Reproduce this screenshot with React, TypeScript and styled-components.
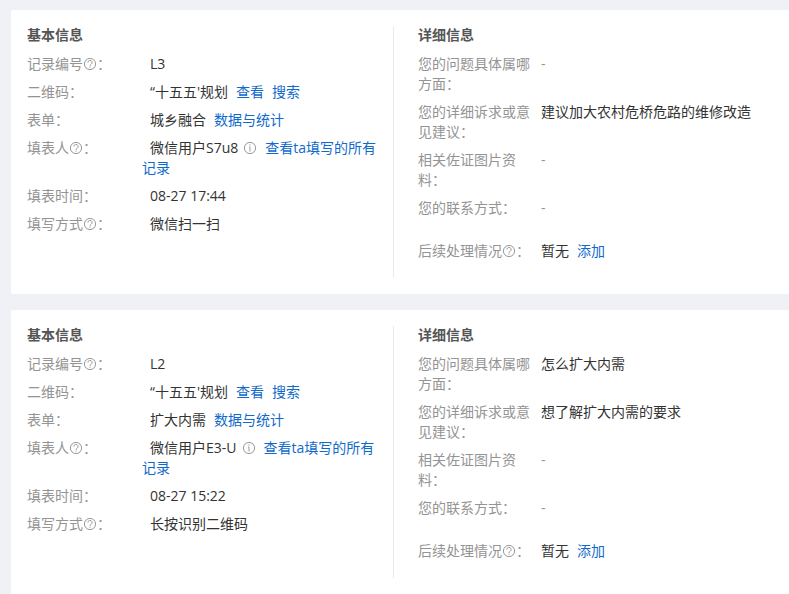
import React from "react";
import styled, { createGlobalStyle } from "styled-components";

const GlobalStyle = createGlobalStyle`
  * { box-sizing: border-box; }
  body {
    margin: 0;
    background: #f0f1f6;
    color: #333;
    font: 14px/20px "Open Sans", "Noto Sans CJK SC", sans-serif;
  }
`;

const Page = styled.main`
  display: flex;
  flex-direction: column;
  gap: 16px;
  padding: 10px 0 0 11px;
`;

const Card = styled.article`
  display: grid;
  grid-template-columns: 366px 1fr;
  padding: 16px 0 16px 16px;
  background: #fff;
  border-radius: 2px 0 0 2px;
`;

const Column = styled.section<{ $divided?: boolean }>`
  padding: ${(p) => (p.$divided ? "0 16px 17px 24px" : "0 16px 17px 0")};
  border-left: ${(p) => (p.$divided ? "1px solid #ebebeb" : "none")};
`;

const Title = styled.h2`
  margin: 0 0 10px;
  font-size: 14px;
  line-height: 18px;
  font-weight: 600;
  color: #555;
`;

const Fields = styled.dl`
  display: flex;
  flex-direction: column;
  gap: 8px;
  margin: 0;
`;

const Row = styled.div<{ $spaced?: boolean }>`
  display: grid;
  grid-template-columns: 115px 1fr;
  padding-top: ${(p) => (p.$spaced ? "15px" : "0")};
`;

const Label = styled.dt`
  color: #949494;
`;

const Value = styled.dd`
  margin: 0;
`;

const Text = styled.span<{ $muted?: boolean }>`
  margin-left: 8px;
  color: ${(p) => (p.$muted ? "#949494" : "#333")};
`;

const Link = styled.a`
  margin-left: 8px;
  color: #0f6acb;
  text-decoration: none;

  &:hover {
    text-decoration: underline;
  }
`;

const Icon = styled.svg<{ $info?: boolean }>`
  display: inline-block;
  width: 14px;
  height: 14px;
  margin-left: ${(p) => (p.$info ? "5px" : "0")};
  vertical-align: -2px;
  fill: none;
  stroke: #999;
  stroke-width: 1;
`;

const HelpIcon = () => (
  <Icon viewBox="0 0 14 14" role="img" aria-label="帮助">
    <circle cx="7" cy="7" r="5.6" />
    <path d="M4.9 5.6a2.1 2.1 0 1 1 3.2 1.7c-.8.5-1.1.8-1.1 1.5" />
    <path d="M7 9.6v1.1" />
  </Icon>
);

const InfoIcon = () => (
  <Icon $info viewBox="0 0 14 14" role="img" aria-label="详情">
    <circle cx="7" cy="7" r="5.6" />
    <path d="M7 3.3v1.2M6.2 5.9H7v4.6" />
  </Icon>
);

type FieldProps = {
  label: string;
  help?: boolean;
  spaced?: boolean;
  value?: string;
  info?: boolean;
  links?: string[];
};

const Field = ({ label, help, spaced, value, info, links = [] }: FieldProps) => (
  <Row $spaced={spaced}>
    <Label>
      {label}
      {help && <HelpIcon />}：
    </Label>
    <Value>
      <Text $muted={!value}>{value ?? "-"}</Text>
      {info && <InfoIcon />}
      {links.map((link) => (
        <Link href="#" key={link}>
          {link}
        </Link>
      ))}
    </Value>
  </Row>
);

type RecordData = {
  id: string;
  form: string;
  user: string;
  time: string;
  method: string;
  question?: string;
  appeal: string;
};

const records: RecordData[] = [
  {
    id: "L3",
    form: "城乡融合",
    user: "微信用户S7u8",
    time: "08-27 17:44",
    method: "微信扫一扫",
    appeal: "建议加大农村危桥危路的维修改造",
  },
  {
    id: "L2",
    form: "扩大内需",
    user: "微信用户E3-U",
    time: "08-27 15:22",
    method: "长按识别二维码",
    question: "怎么扩大内需",
    appeal: "想了解扩大内需的要求",
  },
];

const RecordCard = ({ record }: { record: RecordData }) => (
  <Card>
    <Column>
      <Title>基本信息</Title>
      <Fields>
        <Field label="记录编号" help value={record.id} />
        <Field label="二维码" value="“十五五'规划" links={["查看", "搜索"]} />
        <Field label="表单" value={record.form} links={["数据与统计"]} />
        <Field label="填表人" help value={record.user} info links={["查看ta填写的所有记录"]} />
        <Field label="填表时间" value={record.time} />
        <Field label="填写方式" help value={record.method} />
      </Fields>
    </Column>
    <Column $divided>
      <Title>详细信息</Title>
      <Fields>
        <Field label="您的问题具体属哪方面" value={record.question} />
        <Field label="您的详细诉求或意见建议" value={record.appeal} />
        <Field label="相关佐证图片资料" />
        <Field label="您的联系方式" />
        <Field label="后续处理情况" help spaced value="暂无" links={["添加"]} />
      </Fields>
    </Column>
  </Card>
);

export default function App() {
  return (
    <>
      <GlobalStyle />
      <Page>
        {records.map((record) => (
          <RecordCard key={record.id} record={record} />
        ))}
      </Page>
    </>
  );
}
